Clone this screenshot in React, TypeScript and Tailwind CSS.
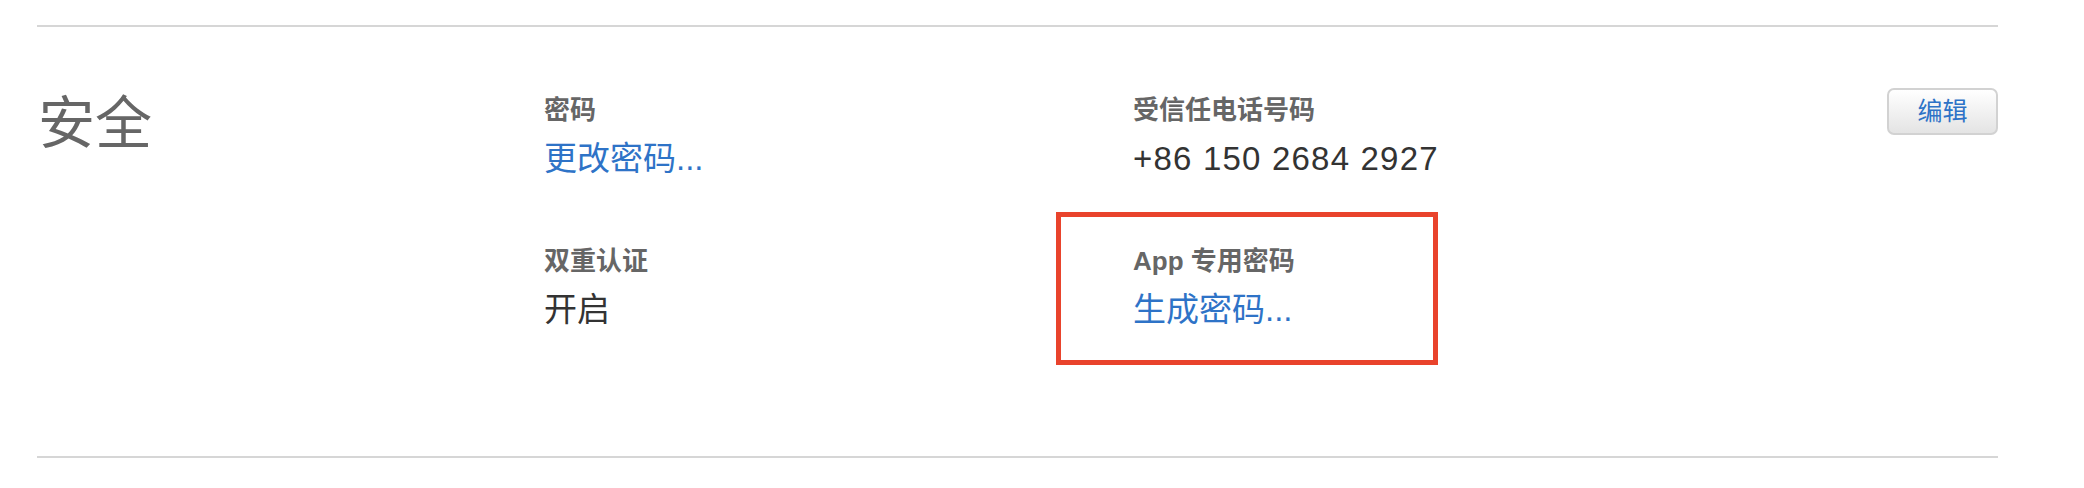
import React from 'react';

const font = 'font-["Liberation_Sans","Noto_Sans_CJK_SC",sans-serif]';

interface FieldProps {
  label: string;
  value: string;
  link?: boolean;
  wide?: boolean;
}

const Field: React.FC<FieldProps> = ({ label, value, link, wide }) => (
  <div>
    <p className="text-[26px] leading-[32px] font-semibold text-[#666666]">{label}</p>
    <p
      className={`mt-[13px] text-[33px] leading-[40px] ${link ? 'text-[#2e73c7]' : 'text-[#333333]'} ${
        wide ? 'tracking-[1.2px]' : ''
      }`}
    >
      {value}
    </p>
  </div>
);

export default function App() {
  return (
    <div className={`${font} bg-white w-[2084px] h-[488px] pt-[25px]`}>
      <section className="ml-[37px] w-[1961px] h-[433px] border-y-2 border-[#d6d6d6] flex pt-[61px]">
        <div className="w-[507px] shrink-0 pl-px mt-[3px]">
          <h2 className="text-[57px] leading-[64px] text-[#666666]">安全</h2>
        </div>

        <div className="w-[589px] shrink-0 mt-[6px] flex flex-col gap-[66px]">
          <Field label="密码" value="更改密码..." link />
          <Field label="双重认证" value="开启" />
        </div>

        <div className="flex-1 mt-[6px] flex flex-col gap-[66px]">
          <Field label="受信任电话号码" value="+86 150 2684 2927" wide />
          <div className="relative">
            <Field label="App 专用密码" value="生成密码..." link />
            <div className="absolute left-[-77px] top-[-33px] w-[382px] h-[153px] border-[5px] border-[#e9432c]" />
          </div>
        </div>

        <div className="shrink-0">
          <button className="w-[111px] h-[47px] rounded-[7px] border-2 border-[#d2d2d2] bg-gradient-to-b from-white to-[#e4e4e4] text-[25px] leading-none text-[#2e73c7]">
            编辑
          </button>
        </div>
      </section>
    </div>
  );
}
